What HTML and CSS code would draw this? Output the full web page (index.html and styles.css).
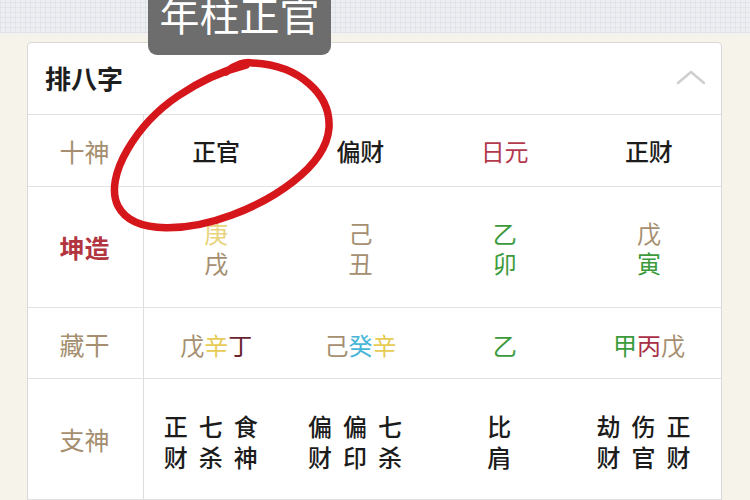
FILE: index.html
```html
<!DOCTYPE html>
<html lang="zh-CN">
<head>
<meta charset="utf-8">
<title>排八字</title>
<link rel="stylesheet" href="styles.css">
</head>
<body>
<div class="page">
  <div class="topband"></div>
  <div class="main">
    <div class="card">
      <div class="card-head">
        <span class="title">排八字</span>
        <svg class="chev" width="32" height="18" viewBox="0 0 32 18"><path d="M3 15 L16 4 L29 15" fill="none" stroke="#cfcfcf" stroke-width="2.6" stroke-linecap="round" stroke-linejoin="round"/></svg>
      </div>
      <div class="grid">
        <div class="lab lab-tan r1">十神</div>
        <div class="cell r1 dark">正官</div>
        <div class="cell r1 dark">偏财</div>
        <div class="cell r1 red-soft">日元</div>
        <div class="cell r1 dark">正财</div>

        <div class="lab lab-red r2">坤造</div>
        <div class="cell r2 stack"><span class="yel">庚</span><span class="tan">戌</span></div>
        <div class="cell r2 stack"><span class="tan">己</span><span class="tan">丑</span></div>
        <div class="cell r2 stack"><span class="grn">乙</span><span class="grn">卯</span></div>
        <div class="cell r2 stack"><span class="tan">戊</span><span class="grn">寅</span></div>

        <div class="lab lab-tan r3">藏干</div>
        <div class="cell r3"><span class="tan">戊</span><span class="yel2">辛</span><span class="dred">丁</span></div>
        <div class="cell r3"><span class="tan">己</span><span class="cyan">癸</span><span class="yel2">辛</span></div>
        <div class="cell r3"><span class="grn">乙</span></div>
        <div class="cell r3"><span class="grn">甲</span><span class="red">丙</span><span class="tan">戊</span></div>

        <div class="lab lab-tan r4">支神</div>
        <div class="cell r4"><div class="words"><span class="w">正<br>财</span><span class="w">七<br>杀</span><span class="w">食<br>神</span></div></div>
        <div class="cell r4"><div class="words"><span class="w">偏<br>财</span><span class="w">偏<br>印</span><span class="w">七<br>杀</span></div></div>
        <div class="cell r4"><div class="words"><span class="w">比<br>肩</span></div></div>
        <div class="cell r4"><div class="words"><span class="w">劫<br>财</span><span class="w">伤<br>官</span><span class="w">正<br>财</span></div></div>
      </div>
    </div>
  </div>
  <div class="tip">年柱正官</div>
  <svg class="mark" width="750" height="500" viewBox="0 0 750 500">
    <path d="M226 72 C 236 64, 246 61, 252 63 C 300 65, 331 95, 329 128 C 326 168, 270 201, 232 215 C 192 230, 134 237, 118 206 C 103 176, 138 123, 178 96 C 200 81, 222 71, 246 65" fill="none" stroke="#d5171c" stroke-width="7.5" stroke-linecap="round" stroke-linejoin="round"/>
  </svg>
</div>
</body>
</html>
```

FILE: styles.css
```css
* { box-sizing: border-box; }
html, body { margin: 0; padding: 0; }
body {
  font-family: "Noto Sans CJK SC", "Noto Sans", sans-serif;
  background: #f6f3ea;
}
.page {
  position: relative;
  width: 750px;
  height: 500px;
  overflow: hidden;
  background: #f6f3ea;
}
.topband {
  height: 33px;
  background-color: #eceef1;
  background-image:
    repeating-linear-gradient(0deg, rgba(214,218,226,0.5) 0 1px, transparent 1px 5px),
    repeating-linear-gradient(90deg, rgba(214,218,226,0.5) 0 1px, transparent 1px 5px);
}
.main {
  padding: 9px 28px 0 27px;
  background: linear-gradient(#f4f2ed, #f6f3ea 10px);
}
.card {
  background: #fff;
  border: 1px solid #d9d9d9;
  border-radius: 4px;
  height: 470px;
}
.card-head {
  height: 72px;
  border-bottom: 1px solid #e0e0e0;
  display: flex;
  align-items: center;
  justify-content: space-between;
  padding: 0 14px 0 17px;
}
.title {
  font-size: 26px;
  font-weight: 700;
  color: #1e1e1e;
  margin-top: -2px;
}
.chev { margin-top: -4px; }
.grid {
  display: grid;
  grid-template-columns: 116px repeat(4, 1fr);
  grid-template-rows: 72px 121px 71px 121px;
}
.lab, .cell {
  display: flex;
  align-items: center;
  justify-content: center;
  border-bottom: 1px solid #e2e2e2;
  font-size: 24px;
}
.lab {
  border-right: 1px solid #dedede;
  font-size: 25px;
  padding-right: 2px;
}
.lab-tan { color: #a58f70; }
.lab-red { color: #b2343f; font-weight: 700; }
.dark { color: #1c1c1c; font-weight: 500; }
.red-soft { color: #b23a4c; }
.stack {
  flex-direction: column;
  line-height: 30px;
  padding-top: 2px;
}
.tan { color: #a58f70; }
.yel { color: #e9d37c; }
.yel2 { color: #e6cb55; }
.grn { color: #3b9b3b; }
.cyan { color: #47b6d6; }
.dred { color: #6a2430; }
.red { color: #a92f46; }
.r3 { padding-top: 2px; }
.words {
  display: flex;
  padding-top: 4px;
}
.w {
  display: block;
  width: 24px;
  margin-right: 11px;
  line-height: 31px;
  color: #1c1c1c;
  font-weight: 500;
  text-align: center;
}
.tip {
  position: absolute;
  left: 148px;
  top: -8px;
  width: 183px;
  height: 63px;
  border-radius: 9px;
  background: #6d6d6d;
  color: #fff;
  font-size: 40px;
  line-height: 44px;
  text-align: center;
}
.mark {
  position: absolute;
  left: 0;
  top: 0;
  pointer-events: none;
}
```
